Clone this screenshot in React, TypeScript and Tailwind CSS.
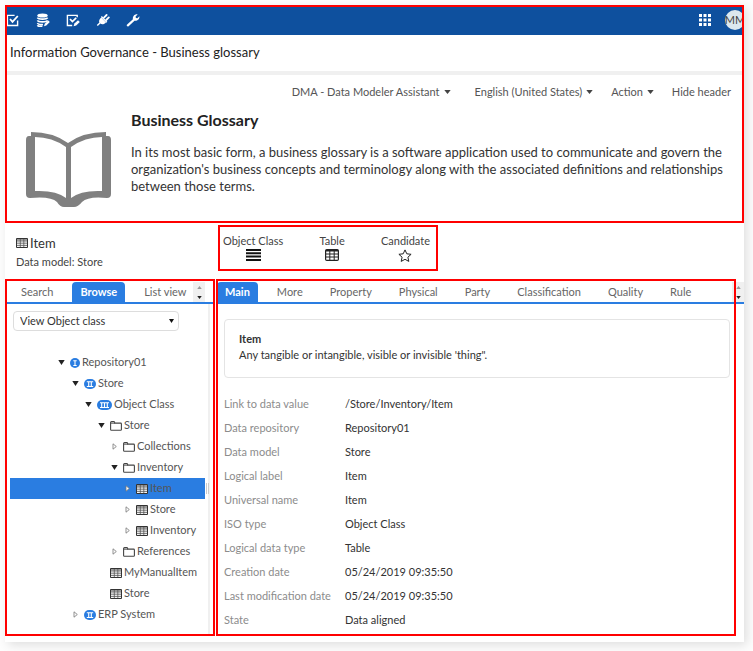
import { useState } from "react";
import type { ReactNode } from "react";
import clsx from "clsx";

type IconKind = "one" | "two" | "three" | "folder" | "table";

interface TreeNode {
  id: string;
  label: string;
  level: number;
  icon: IconKind;
  state: "open" | "closed" | "leaf";
}

const tree: TreeNode[] = [
  { id: "repo", label: "Repository01", level: 0, icon: "one", state: "open" },
  { id: "store", label: "Store", level: 1, icon: "two", state: "open" },
  { id: "class", label: "Object Class", level: 2, icon: "three", state: "open" },
  { id: "folder", label: "Store", level: 3, icon: "folder", state: "open" },
  { id: "coll", label: "Collections", level: 4, icon: "folder", state: "closed" },
  { id: "inv", label: "Inventory", level: 4, icon: "folder", state: "open" },
  { id: "inv-item", label: "Item", level: 5, icon: "table", state: "closed" },
  { id: "inv-store", label: "Store", level: 5, icon: "table", state: "closed" },
  { id: "inv-inv", label: "Inventory", level: 5, icon: "table", state: "closed" },
  { id: "refs", label: "References", level: 4, icon: "folder", state: "closed" },
  { id: "manual", label: "MyManualItem", level: 3, icon: "table", state: "leaf" },
  { id: "store-t", label: "Store", level: 3, icon: "table", state: "leaf" },
  { id: "erp", label: "ERP System", level: 1, icon: "two", state: "closed" },
];

const indents = [
  "pl-[48px]",
  "pl-[62px]",
  "pl-[75px]",
  "pl-[88px]",
  "pl-[101px]",
  "pl-[114px]",
];

const details = [
  ["Link to data value", "/Store/Inventory/Item"],
  ["Data repository", "Repository01"],
  ["Data model", "Store"],
  ["Logical label", "Item"],
  ["Universal name", "Item"],
  ["ISO type", "Object Class"],
  ["Logical data type", "Table"],
  ["Creation date", "05/24/2019 09:35:50"],
  ["Last modification date", "05/24/2019 09:35:50"],
  ["State", "Data aligned"],
];

const mainTabs = [
  "Main",
  "More",
  "Property",
  "Physical",
  "Party",
  "Classification",
  "Quality",
  "Rule",
];

/* Red frame drawn over a zone */
function Frame() {
  return (
    <span className="pointer-events-none absolute inset-0 z-10 border-2 border-[#ff0000]" />
  );
}

function Caret() {
  return (
    <svg viewBox="0 0 8 5" className="h-1 w-[7px]" aria-hidden="true">
      <path d="M0 0h8L4 5z" fill="#444" />
    </svg>
  );
}

function GridIcon({ className }: { className: string }) {
  return (
    <svg viewBox="0 0 12 10" className={className} aria-hidden="true">
      <path d="M.5.5h11v9H.5z" fill="#f4f4f4" stroke="#333" />
      <path d="M1 1h10v1.5H1z" fill="#999" />
      <path d="M1 3h10M1 5.2h10M1 7.4h10M4.3 1v8M7.8 1v8" stroke="#555" strokeWidth=".8" />
    </svg>
  );
}

function NodeIcon({ kind }: { kind: IconKind }) {
  if (kind === "table") return <GridIcon className="h-[10px] w-3" />;
  if (kind === "folder") {
    return (
      <svg viewBox="0 0 12 10" className="h-[10px] w-3" aria-hidden="true">
        <path
          d="M.6 8.4V1.6q0-1 1-1h2.3q.8 0 .8 1v.5h5.9q.8 0 .8.8v5.5q0 .9-.8.9H1.4q-.8 0-.8-.9z"
          fill="#fff"
          stroke="#444"
          strokeWidth="1.1"
        />
        <path d="M.8 2.2h4" stroke="#444" strokeWidth=".9" />
      </svg>
    );
  }
  const shapes = {
    one: { w: 10, cls: "h-[10px] w-[10px]", bars: "M5 3v4.5M3.3 2.8h3.4M3.3 7.5h3.4" },
    two: { w: 12, cls: "h-[10px] w-3", bars: "M4.7 3v4.5M7.3 3v4.5M2.8 2.8h6.4M2.8 7.5h6.4" },
    three: {
      w: 15,
      cls: "h-[10px] w-[15px]",
      bars: "M4.7 3v4.5M7.5 3v4.5M10.3 3v4.5M3 2.8h9M3 7.5h9",
    },
  };
  const s = shapes[kind];
  return (
    <svg viewBox={`0 0 ${s.w} 10`} className={s.cls} aria-hidden="true">
      <rect width={s.w} height="10" rx="5" fill="#2a7de1" />
      <path d={s.bars} stroke="#fff" strokeWidth="1.1" />
    </svg>
  );
}

function Twisty({ state }: { state: TreeNode["state"] }) {
  return (
    <svg viewBox="0 0 7 7" className="h-[7px] w-[7px]" aria-hidden="true">
      {state === "open" && <path d="M.3 1h6.4L3.5 6z" fill="#222" />}
      {state === "closed" && (
        <path d="M2 .8v5.4L5.3 3.5z" fill="#fff" stroke="#777" strokeWidth=".8" />
      )}
    </svg>
  );
}

function Spinner() {
  return (
    <span className="flex w-3 flex-col bg-[#f0f0f0]">
      <button aria-label="Scroll tabs up" className="flex flex-1 items-center justify-center">
        <svg viewBox="0 0 6 4" className="h-[3px] w-[5px]">
          <path d="M0 4h6L3 0z" fill="#999" />
        </svg>
      </button>
      <button aria-label="Scroll tabs down" className="flex flex-1 items-center justify-center">
        <svg viewBox="0 0 6 4" className="h-[3px] w-[5px]">
          <path d="M0 0h6L3 4z" fill="#222" />
        </svg>
      </button>
    </span>
  );
}

interface TabsProps {
  tabs: string[];
  active: string;
  onSelect: (tab: string) => void;
}

function Tabs({ tabs, active, onSelect }: TabsProps) {
  return (
    <div role="tablist" className="flex min-w-0 flex-1 gap-[11px]">
      {tabs.map((t) => (
        <button
          key={t}
          role="tab"
          aria-selected={t === active}
          onClick={() => onSelect(t)}
          className={clsx(
            "h-5 px-2 whitespace-nowrap",
            t === active ? "rounded-t-sm bg-[#2a7de1] font-bold text-white" : "text-[#666]",
          )}
        >
          {t}
        </button>
      ))}
    </div>
  );
}

function ToolButton({ label, children }: { label: string; children: ReactNode }) {
  return (
    <button aria-label={label}>
      <svg viewBox="0 0 14 14" className="h-[14px] w-[14px]" fill="none" stroke="#fff">
        {children}
      </svg>
    </button>
  );
}

function TopBar() {
  return (
    <nav className="flex h-[30px] items-center overflow-hidden bg-[#0e509e]">
      <div className="flex flex-1 gap-4 pl-px">
        <ToolButton label="Validation">
          <path d="M11.6 7.5v5H1.4V2.4h7.2" strokeWidth="1.4" />
          <path d="M4 6l2.5 2.8L11.8 3" strokeWidth="1.8" />
        </ToolButton>
        <ToolButton label="Data">
          <ellipse cx="6.5" cy="2.6" rx="5.2" ry="2" fill="#fff" stroke="none" />
          <path
            d="M1.4 4.6c1 2 9.2 2 10.2 0M1.4 7.4c1 2 9.2 2 10.2 0M1.4 10c.8 1.6 4 1.9 5.6 1.5M1.4 12.2c.8 1.2 3 1.5 5 1.3"
            strokeWidth="1.6"
          />
          <path d="M8 13.2l.8-2.4 3.4-3.4 1.6 1.6-3.5 3.5z" fill="#fff" stroke="none" />
        </ToolButton>
        <ToolButton label="Edit">
          <path d="M6.2 12.5H1.4V2.4h9.8v1.8" strokeWidth="1.4" />
          <path d="M4 6l2.4 2.6L10.2 4.8" strokeWidth="1.7" />
          <path d="M7.6 13.2l.8-2.6 3.6-3.4 1.8 1.8-3.6 3.4z" fill="#fff" stroke="none" />
        </ToolButton>
        <ToolButton label="Connect">
          <path
            d="M5.2 4.4l4.8 5C8.4 11.4 5.8 11.6 4.4 10.6L1.8 13 .8 12 3.4 9.6C2.6 8 3.4 5.8 5.2 4.4z"
            fill="#fff"
            stroke="none"
          />
          <path d="M5.4 3.6l5.4 5.6" strokeWidth="1.4" />
          <path d="M8 4.6l2.6-2.6M10.2 7l2.6-2.6" strokeWidth="1.8" strokeLinecap="round" />
        </ToolButton>
        <ToolButton label="Settings">
          <path
            d="M.9 11.8l6-5.6C6.5 3.4 8.6 1 11.6 1.4L9.6 3.5l.3 1.4 1.5.3 2-1.9c.3 3-2 4.9-4.9 4.5L2.6 13.2c-1 .8-2.5-.4-1.7-1.4z"
            fill="#fff"
            stroke="none"
          />
        </ToolButton>
      </div>
      <button aria-label="Applications" className="mr-[14px]">
        <svg viewBox="0 0 12 12" className="h-3 w-3" fill="#fff">
          <path d="M0 0h3v3H0zM4.5 0h3v3h-3zM9 0h3v3H9zM0 4.5h3v3H0zM4.5 4.5h3v3h-3zM9 4.5h3v3H9zM0 9h3v3H0zM4.5 9h3v3h-3zM9 9h3v3H9z" />
        </svg>
      </button>
      <button className="-mr-px flex h-5 w-5 items-center justify-center rounded-full bg-[#dce8ee] text-[11px] text-[#444]">
        MM
      </button>
    </nav>
  );
}

function Header() {
  const menus = ["DMA - Data Modeler Assistant", "English (United States)", "Action"];
  return (
    <header className="relative h-[218px]">
      <Frame />
      <TopBar />
      <h1 className="box-content flex h-9 items-center border-b-4 border-[#f0f0f0] bg-white pl-[5px] text-[13px] text-[#222]">
        Information Governance - Business glossary
      </h1>
      <div className="flex items-center justify-end gap-[18px] pt-[9px] pr-[13px] text-[11px] leading-4 text-[#555]">
        {menus.map((m, i) => (
          <button key={m} className={clsx("flex items-center gap-1", i === 0 && "mr-[6px]")}>
            {m}
            <Caret />
          </button>
        ))}
        <a href="#header">Hide header</a>
      </div>
      <div className="flex gap-5 pl-[21px]">
        <svg viewBox="0 0 85 76" className="mt-8 h-[76px] w-[85px] shrink-0" aria-hidden="true">
          <path
            d="M5 0Q27 0 42 11Q57 0 80 0V4H82Q85 4 85 8V62Q85 66 81 66Q62 64 56 70Q52 75 48 75H38Q34 75 31 70Q25 64 4 66Q0 66 0 62V8Q0 4 3 4H5z"
            fill="#808080"
          />
          <path d="M9 5Q26 5 40 15V66Q30 58 9 59zM76 5Q59 5 45 15V66Q55 58 76 59z" fill="#fff" />
        </svg>
        <div className="min-w-0 flex-1 pt-[10px]">
          <h2 className="text-base leading-5 font-bold text-[#222]">Business Glossary</h2>
          <p className="mt-[14px] text-[13px] leading-[17px] text-[#333]">
            In its most basic form, a business glossary is a software application used to
            communicate and govern the organization's business concepts and terminology along with
            the associated definitions and relationships between those terms.
          </p>
        </div>
      </div>
    </header>
  );
}

function Summary() {
  return (
    <div className="flex h-14 pt-[2px]">
      <div className="w-[213px] pt-2 pl-[11px] text-[#333]">
        <h3 className="flex items-center gap-[2px] text-[13px] leading-5">
          <GridIcon className="h-[10px] w-3" />
          Item
        </h3>
        <p className="text-[11px] leading-[18px] text-[#444]">Data model: Store</p>
      </div>
      <div className="relative flex h-[46px] w-[220px] justify-between pt-2 pr-[8px] pl-[5px] text-[11px] leading-4 text-[#444]">
        <Frame />
        <div className="flex flex-col items-center">
          Object Class
          <svg viewBox="0 0 15 12" className="h-3 w-[15px]" aria-hidden="true">
            <path d="M0 1h15M0 4.3h15M0 7.6h15M0 11h15" stroke="#111" strokeWidth="2" />
          </svg>
        </div>
        <div className="flex flex-col items-center">
          Table
          <svg viewBox="0 0 14 12" className="h-3 w-[14px]" aria-hidden="true">
            <rect x=".6" y=".6" width="12.8" height="10.8" rx="1.2" fill="none" stroke="#222" strokeWidth="1.2" />
            <path d="M1 1h12v1.5H1z" fill="#222" />
            <path d="M1 5h12M1 8h12M4.8 1v10M9.2 1v10" stroke="#222" />
          </svg>
        </div>
        <div className="flex flex-col items-center">
          Candidate
          <svg viewBox="0 0 14 13" className="h-[13px] w-[14px]" aria-hidden="true">
            <path
              d="M7 .9l1.8 3.9 4.3.5-3.2 2.9.9 4.2L7 10.3l-3.8 2.1.9-4.2L.9 5.3l4.3-.5z"
              fill="none"
              stroke="#222"
              strokeLinejoin="round"
            />
          </svg>
        </div>
      </div>
    </div>
  );
}

function Browser() {
  const [tab, setTab] = useState("Browse");
  const [selected, setSelected] = useState("inv-item");
  return (
    <aside className="relative w-[210px] shrink-0 pt-[3px]">
      <Frame />
      <div className="flex border-b-2 border-[#2a7de1] pr-[10px] pl-2">
        <Tabs tabs={["Search", "Browse", "List view"]} active={tab} onSelect={setTab} />
        <Spinner />
      </div>
      <div className="mr-[5px] border-r-2 border-[#f0f0f0] pt-[7px] pb-[10px] pl-[5px]">
        <div className="relative mr-[29px] ml-[3px]">
          <select
            aria-label="View"
            className="h-5 w-full appearance-none rounded-sm border border-[#ddd] bg-white pl-[6px] text-[#333]"
          >
            <option>View Object class</option>
          </select>
          <svg viewBox="0 0 5 4" className="absolute top-2 right-[5px] h-1 w-[5px]">
            <path d="M0 0h5L2.5 4z" fill="#111" />
          </svg>
        </div>
        <ul className="mt-[21px] mr-[3px]">
          {tree.map((n) => (
            <li key={n.id}>
              <button
                onClick={() => setSelected(n.id)}
                className={clsx(
                  "flex h-[21px] w-full items-center whitespace-nowrap text-[#555]",
                  indents[n.level],
                  n.id === selected && "bg-[#2a7de1]",
                )}
              >
                <Twisty state={n.state} />
                <span className="mr-[2px] ml-[5px]">
                  <NodeIcon kind={n.icon} />
                </span>
                {n.label}
              </button>
            </li>
          ))}
        </ul>
      </div>
      {/* Splitter handle */}
      <span className="absolute top-[204px] right-[6px] h-[11px] w-[3px] border-x border-[#ccc]" />
    </aside>
  );
}

function Details() {
  const [tab, setTab] = useState("Main");
  return (
    <main className="relative min-w-0 flex-1 pt-[3px]">
      <span className="pointer-events-none absolute inset-y-0 right-2 left-0 z-10 border-2 border-[#ff0000]" />
      <div className="flex border-b-2 border-[#2a7de1] pl-px">
        <Tabs tabs={mainTabs} active={tab} onSelect={setTab} />
        <Spinner />
      </div>
      <div className="mt-[15px] mr-[14px] ml-2 rounded-sm border border-[#e4e4e4] px-[14px] pt-[11px] pb-[14px] leading-4 text-[#333]">
        <h4 className="font-bold">Item</h4>
        <p>Any tangible or intangible, visible or invisible 'thing".</p>
      </div>
      <dl className="mt-[14px] ml-2">
        {details.map(([label, value]) => (
          <div key={label} className="flex h-6 items-center">
            <dt className="w-[121px] text-[#8c8c8c]">{label}</dt>
            <dd className="text-[#333]">{value}</dd>
          </div>
        ))}
      </dl>
    </main>
  );
}

export default function App() {
  return (
    <div className="min-h-screen bg-[#fdfdfd] pt-[5px] pr-[9px] pb-[9px] pl-[5px] font-['Lato','Open_Sans',sans-serif]">
      <div className="bg-white pb-[6px] shadow-[3px_3px_10px_rgba(0,0,0,0.12)]">
        <Header />
        <Summary />
        <div className="flex min-h-[357px] gap-px text-[11px]">
          <Browser />
          <Details />
        </div>
      </div>
    </div>
  );
}
